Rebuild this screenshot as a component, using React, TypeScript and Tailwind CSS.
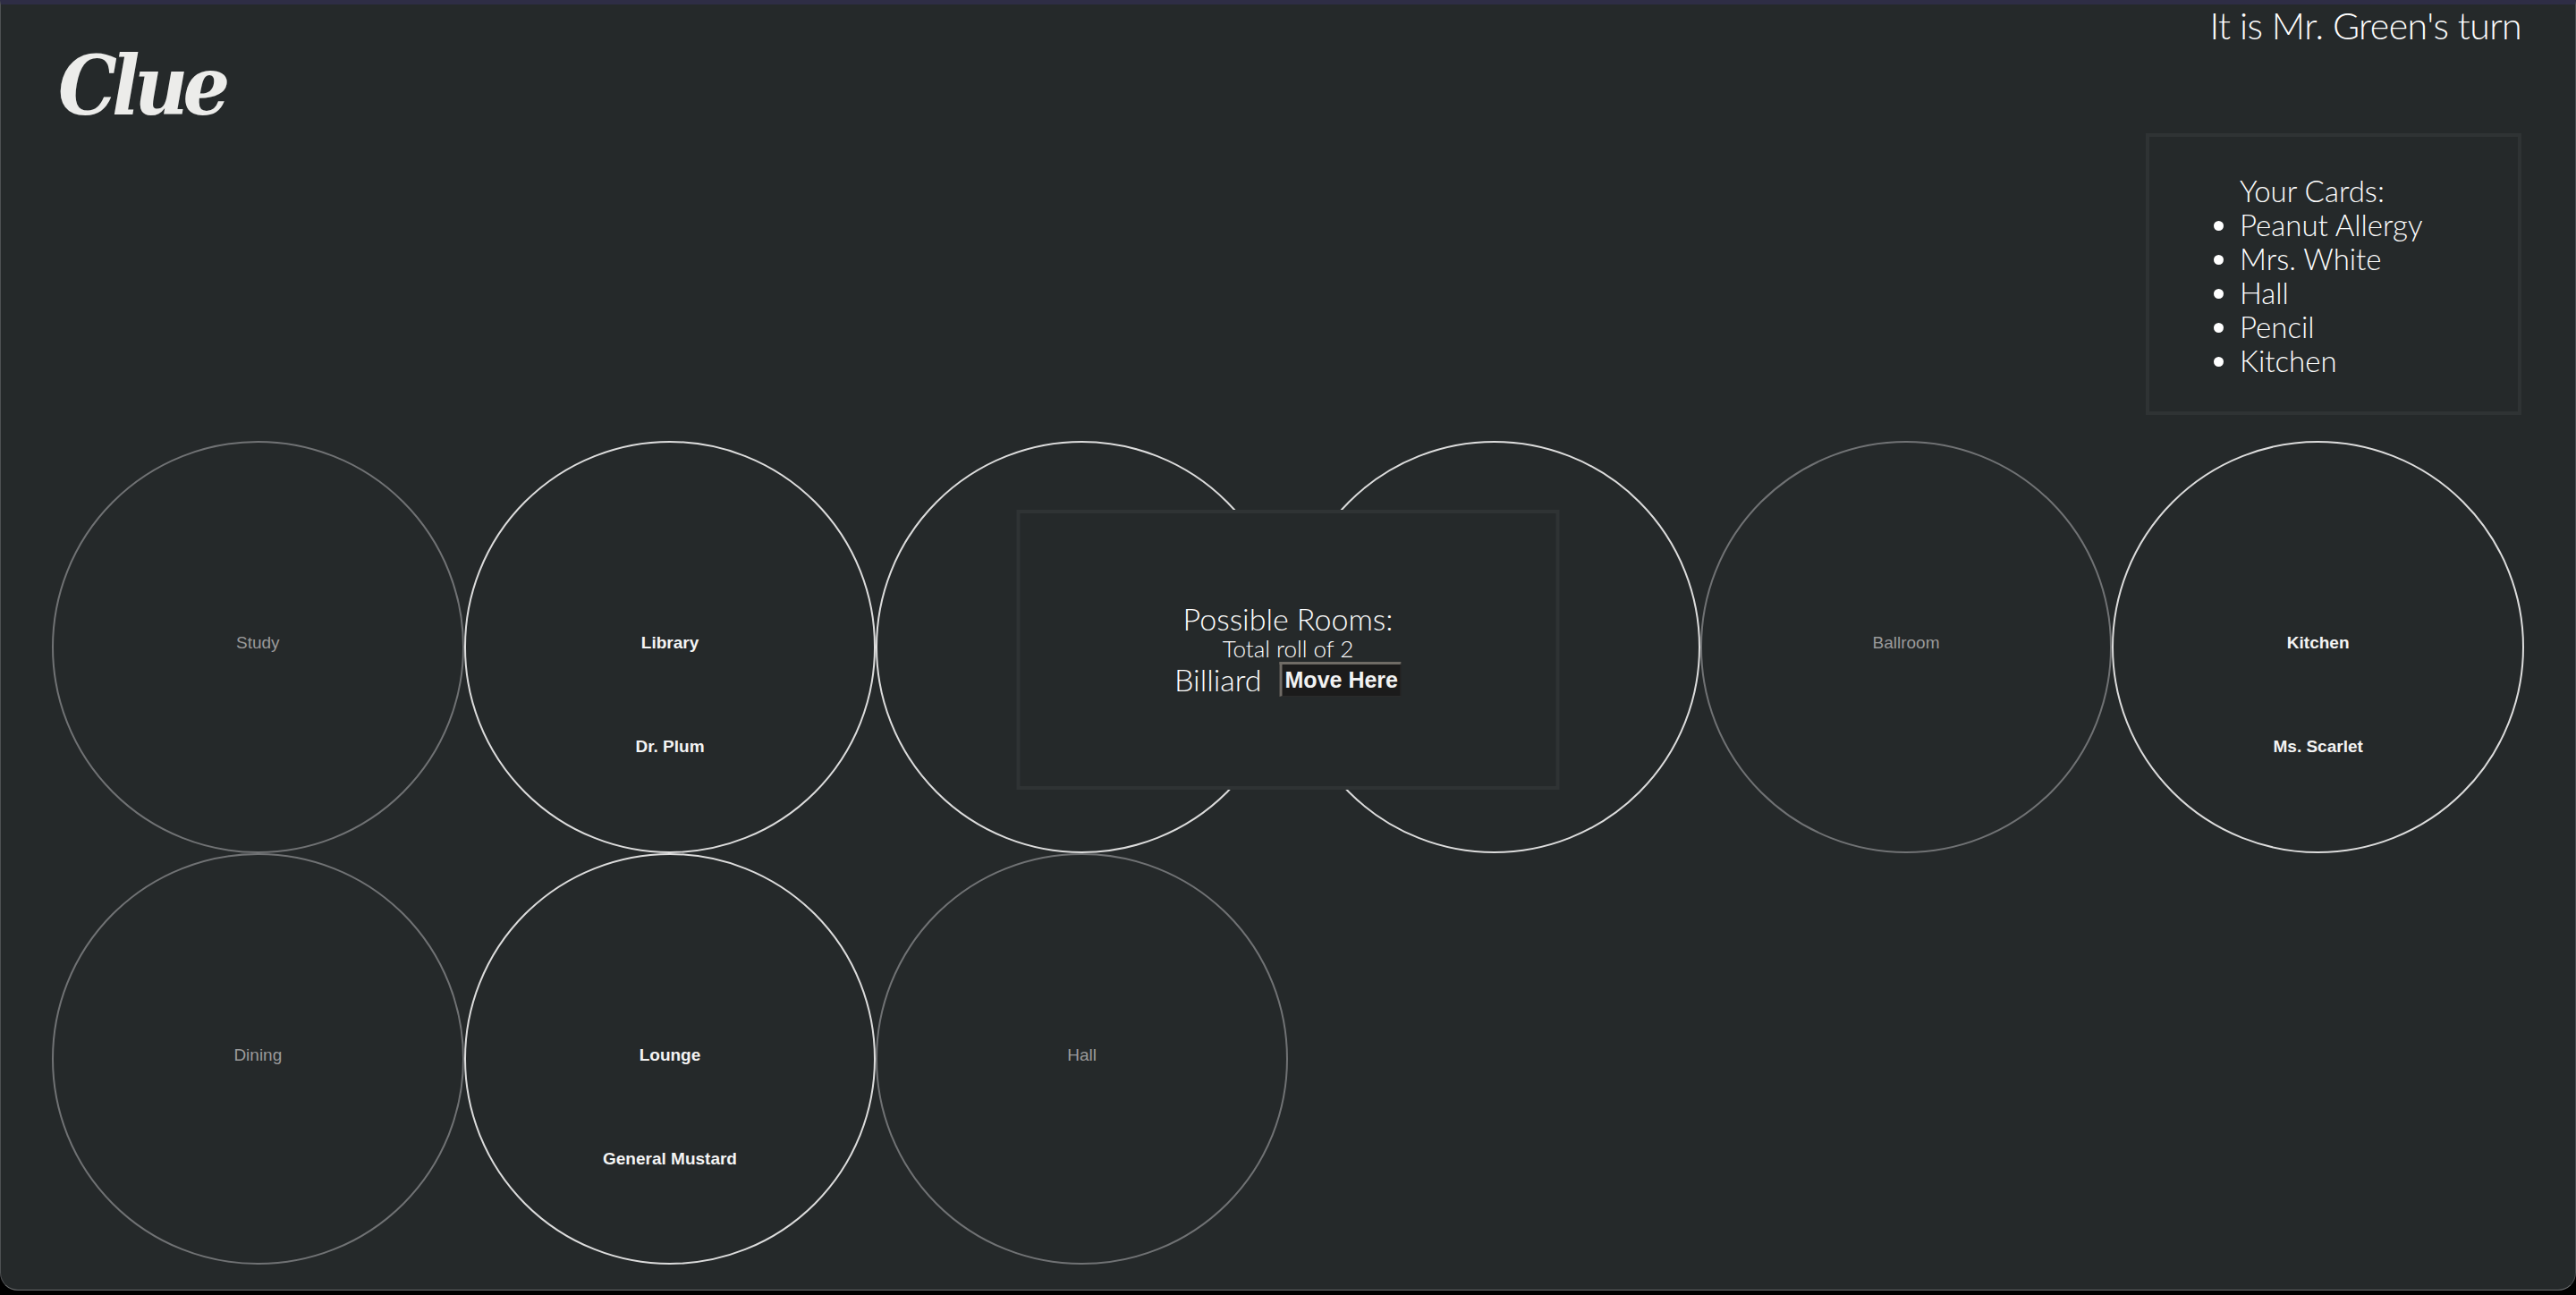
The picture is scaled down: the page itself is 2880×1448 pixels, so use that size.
import React from "react";

type Room = {
  name: string;
  lit: boolean;
  suspect?: string;
};

const rooms: Room[] = [
  { name: "Study", lit: false },
  { name: "Library", lit: true, suspect: "Dr. Plum" },
  { name: "Conservatory", lit: true },
  { name: "Billiard", lit: true },
  { name: "Ballroom", lit: false },
  { name: "Kitchen", lit: true, suspect: "Ms. Scarlet" },
  { name: "Dining", lit: false },
  { name: "Lounge", lit: true, suspect: "General Mustard" },
  { name: "Hall", lit: false },
];

const cards = ["Peanut Allergy", "Mrs. White", "Hall", "Pencil", "Kitchen"];

const thin = { fontFamily: "Lato, 'Open Sans', sans-serif" };
const arial = { fontFamily: "'Liberation Sans', Arial, sans-serif" };

function RoomCircle({ room }: { room: Room }) {
  return (
    <div
      className={
        room.lit
          ? "grid aspect-square grid-rows-[1fr_auto_1fr] rounded-full border-2 border-[#dcdcdc] pb-[8px] text-center"
          : "grid aspect-square grid-rows-[1fr_auto_1fr] rounded-full border-2 border-[#707274] pb-[8px] text-center"
      }
      style={arial}
    >
      <div />
      <div
        className={
          room.lit
            ? "text-[19px] leading-[22px] font-bold text-[#f4f4f4]"
            : "text-[19px] leading-[22px] text-[#9a9a9a]"
        }
      >
        {room.name}
      </div>
      <div className="pt-[94px] text-[19px] leading-[22px] font-bold text-[#f4f4f4]">
        {room.suspect}
      </div>
    </div>
  );
}

export default function App() {
  return (
    <div className="h-[1448px] w-full overflow-hidden bg-black">
      <div className="h-[1443px] rounded-b-[20px] border-x border-b border-t-[5px] border-x-[#4d5052] border-b-[#6b6d6f] border-t-[#2e2d45] bg-[#25292a] px-[57px] text-white">
        <div className="flex justify-between">
          <h1
            className="mt-[36px] ml-[7px] text-[92px] leading-[110px] font-bold italic tracking-[-6px] text-[#ececea]"
            style={{ fontFamily: "'DejaVu Serif Condensed', 'DejaVu Serif', serif" }}
          >
            Clue
          </h1>
          <div className="mr-[3px] flex flex-col items-end">
            <p className="mt-[3px] text-[41px] leading-none font-light tracking-[-0.6px]" style={thin}>
              It is Mr. Green's turn
            </p>
            <div
              className="mt-[100px] h-[315px] w-[420px] border-4 border-[#2f3334] pt-[41px] pl-[101px] text-[33px] leading-[38px] font-light"
              style={thin}
            >
              <p>Your Cards:</p>
              <ul className="list-disc">
                {cards.map((c) => (
                  <li key={c}>{c}</li>
                ))}
              </ul>
            </div>
          </div>
        </div>

        <div className="relative mt-[29px] grid grid-cols-6">
          {rooms.map((r) => (
            <RoomCircle key={r.name} room={r} />
          ))}

          <div className="absolute top-[77px] left-1/2 flex h-[313px] w-[607px] -translate-x-1/2 flex-col items-center justify-center border-4 border-[#2f3334] bg-[#25292a]">
            <p className="text-[34px] leading-[36px] font-light" style={thin}>
              Possible Rooms:
            </p>
            <p className="text-[26px] leading-[30px] font-light" style={thin}>
              Total roll of 2
            </p>
            <div className="flex items-center gap-[20px]">
              <span className="text-[34px] leading-[38px] font-light" style={thin}>
                Billiard
              </span>
              <button
                type="button"
                className="border-t-[3px] border-r border-b border-l-[3px] border-t-[#6f6b65] border-r-[#2a2a2a] border-b-[#2a2a2a] border-l-[#6f6b65] bg-[#1b1b1b] px-[3px] pt-[2px] pb-[3px] text-[25px] leading-[30px] font-bold text-[#f2f2f2]"
                style={arial}
              >
                Move Here
              </button>
            </div>
          </div>
        </div>
      </div>
    </div>
  );
}
